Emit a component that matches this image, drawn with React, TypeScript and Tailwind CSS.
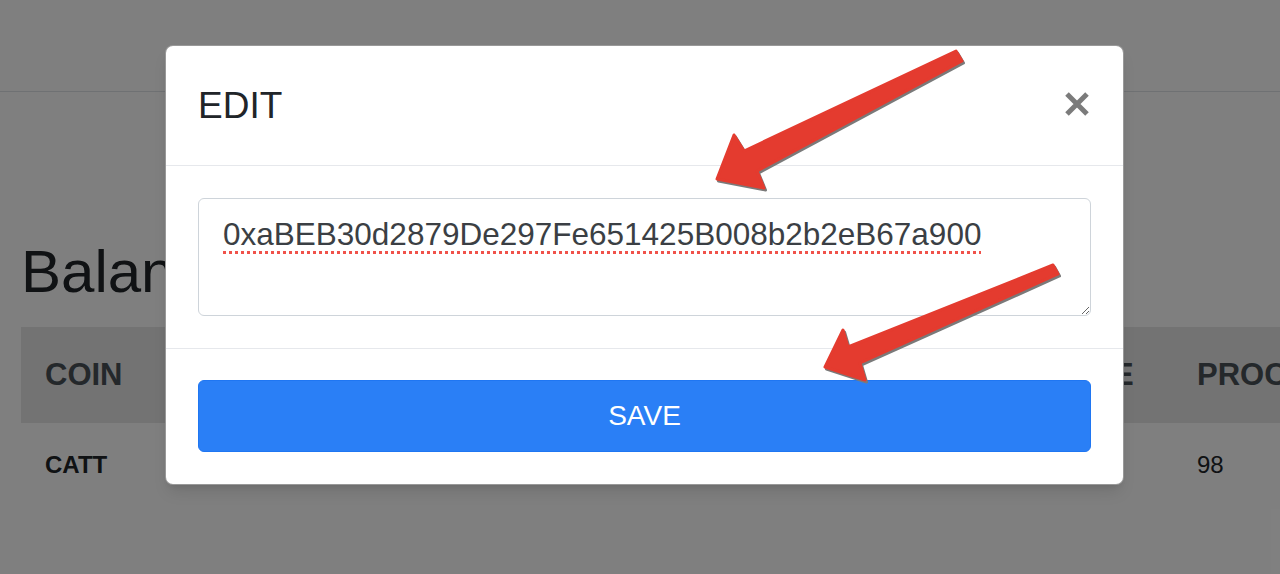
import React from "react";

const font = { fontFamily: '"Liberation Sans", Arial, sans-serif' };

const columns = [
  { label: "COIN", width: "w-[380px]" },
  { label: "BALANCE", width: "w-[310px]" },
  { label: "WALLET", width: "w-[304px]" },
  { label: "PRICE", width: "w-[158px]" },
  { label: "PROCEEDS", width: "w-[240px]" },
];

const rows = [["CATT", "1,250", "0xaBEB", "0.08", "98"]];

// red annotation arrows drawn on top of the screenshot
const Arrows: React.FC = () => (
  <svg className="pointer-events-none absolute inset-0" width="1280" height="574" viewBox="0 0 1280 574">
    <g transform="translate(1.5 2)" fill="#7a7a7a" stroke="#7a7a7a" strokeWidth="3" strokeLinejoin="round">
      <polygon points="956,51 962,61 757,171 764,188 717,179 734,135 744,151" />
      <polygon points="1053,265 1058,274 860,363 865,380 825,367 843,330 848,347" />
    </g>
    <g fill="#e43b2f" stroke="#e43b2f" strokeWidth="3" strokeLinejoin="round">
      <polygon points="956,51 962,61 757,171 764,188 717,179 734,135 744,151" />
      <polygon points="1053,265 1058,274 860,363 865,380 825,367 843,330 848,347" />
    </g>
  </svg>
);

export default function App() {
  return (
    <div className="relative h-[574px] w-[1280px] overflow-hidden bg-white text-[#212529]" style={font}>
      {/* page behind the modal */}
      <nav className="h-[92px] border-b border-[#dee2e6]" />
      <div className="pl-[21px]">
        <h1 className="mt-[144px] mb-[19px] text-[60px] leading-[72px] font-medium">Balances</h1>
        <div className="w-[1400px]">
          <div className="flex h-[96px] items-center bg-[#e6e6e6] text-[#495057]">
            {columns.map((c) => (
              <div key={c.label} className={`${c.width} px-6 text-[31px] font-bold`}>
                {c.label}
              </div>
            ))}
          </div>
          {rows.map((r) => (
            <div key={r[0]} className="flex h-[84px] items-center text-[24px]">
              {r.map((v, i) => (
                <div key={i} className={`${columns[i].width} px-6 ${i === 0 ? "font-bold" : ""}`}>
                  {v}
                </div>
              ))}
            </div>
          ))}
        </div>
      </div>

      {/* backdrop */}
      <div className="absolute inset-0 bg-black/50" />

      {/* modal */}
      <div className="absolute inset-0">
        <div className="ml-[165px] mt-[45px] w-[959px] rounded-[8px] border border-black/40 bg-white shadow-lg">
          <div className="flex h-[120px] items-center justify-between border-b border-[#e6e8ec] pl-[32px] pr-[34px]">
            <h2 className="text-[37px] leading-none text-[#212529]">EDIT</h2>
            <button className="-mt-[3px] text-[#7b7b7b]">
              <svg width="24" height="24" viewBox="0 0 24 24">
                <path d="M2 2 L22 22 M22 2 L2 22" stroke="currentColor" strokeWidth="5" />
              </svg>
            </button>
          </div>
          <div className="border-b border-[#e6e8ec] p-[32px]">
            <textarea
              defaultValue="0xaBEB30d2879De297Fe651425B008b2b2eB67a900"
              spellCheck={false}
              className="block h-[118px] w-full rounded-[6px] border border-[#ced4da] px-[24px] py-[12px] text-[31.5px] leading-[1.5] text-[#3b3f44] underline decoration-[#f0524a] decoration-dotted decoration-[3px] underline-offset-[6px] outline-none"
              style={font}
            />
          </div>
          <div className="px-[32px] pt-[31px] pb-[32px]">
            <button className="flex h-[72px] w-full items-center justify-center rounded-[6px] border border-[#1f76f2] bg-[#2a7ff6] text-[28px] text-white">
              SAVE
            </button>
          </div>
        </div>
      </div>

      <Arrows />
    </div>
  );
}
